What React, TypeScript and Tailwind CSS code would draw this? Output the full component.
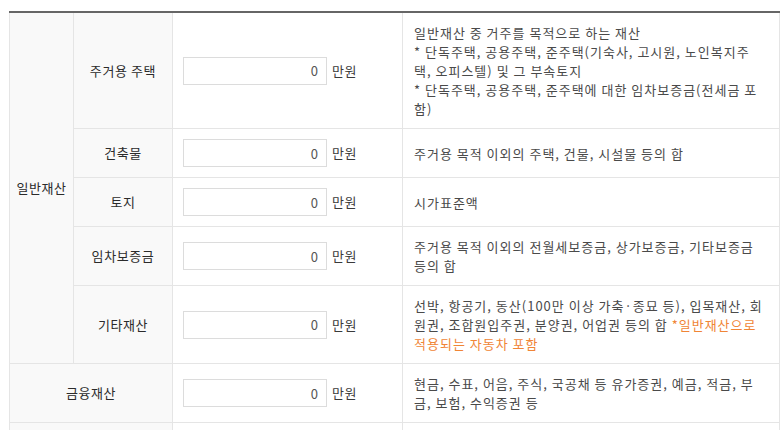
import type { ReactNode } from 'react';

const font = { fontFamily: '"Noto Sans CJK KR", "Noto Sans", sans-serif' };

const labelCls =
  'bg-[#f9f9f9] border border-[#e5e5e5] font-normal text-[13px] tracking-[0.6px] text-[#2b2b2b] text-center';
const descCls =
  'border border-[#e5e5e5] pl-[11px] pr-[4px] py-[10px] text-[13px] tracking-[1px] leading-[19px] text-[#4a4a4a]';

function AmountInput() {
  return (
    <div className="flex items-center gap-[5px]">
      <input
        readOnly
        value="0"
        className="w-[144px] h-[28px] border border-[#dcdcdc] bg-white text-right pr-[8px] text-[13px] text-[#555] outline-none"
      />
      <span className="text-[13px] tracking-[0.6px] text-[#3a3a3a]">만원</span>
    </div>
  );
}

function Row({ label, desc, first }: { label: string; desc: ReactNode; first?: ReactNode }) {
  return (
    <tr>
      {first}
      <th className={labelCls}>{label}</th>
      <td className="border border-[#e5e5e5] pl-[10px] py-[10px] align-middle">
        <AmountInput />
      </td>
      <td className={descCls}>{desc}</td>
    </tr>
  );
}

export default function App() {
  return (
    <div className="bg-white w-[784px] h-[430px] overflow-hidden pt-[11px] pl-[9px]" style={font}>
      <table className="w-[770px] border-collapse border-t-2 border-t-[#666] table-fixed">
        <colgroup>
          <col className="w-[64px]" />
          <col className="w-[99px]" />
          <col className="w-[230px]" />
          <col className="w-[377px]" />
        </colgroup>
        <tbody>
          <Row
            first={
              <th rowSpan={5} className={labelCls}>
                일반재산
              </th>
            }
            label="주거용 주택"
            desc={
              <>
                일반재산 중 거주를 목적으로 하는 재산
                <br />* 단독주택, 공용주택, 준주택(기숙사, 고시원, 노인복지주
                <br />택, 오피스텔) 및 그 부속토지
                <br />* 단독주택, 공용주택, 준주택에 대한 임차보증금(전세금 포
                <br />함)
              </>
            }
          />
          <Row label="건축물" desc="주거용 목적 이외의 주택, 건물, 시설물 등의 합" />
          <Row label="토지" desc="시가표준액" />
          <Row
            label="임차보증금"
            desc={
              <>
                주거용 목적 이외의 전월세보증금, 상가보증금, 기타보증금
                <br />
                등의 합
              </>
            }
          />
          <Row
            label="기타재산"
            desc={
              <>
                선박, 항공기, 동산(100만 이상 가축·종묘 등), 입목재산, 회
                <br />
                원권, 조합원입주권, 분양권, 어업권 등의 합{' '}
                <span className="text-[#f08536]">
                  *일반재산으로
                  <br />
                  적용되는 자동차 포함
                </span>
              </>
            }
          />
          <tr>
            <th colSpan={2} className={labelCls}>
              금융재산
            </th>
            <td className="border border-[#e5e5e5] pl-[10px] py-[10px]">
              <AmountInput />
            </td>
            <td className={descCls}>
              현금, 수표, 어음, 주식, 국공채 등 유가증권, 예금, 적금, 부
              <br />금, 보험, 수익증권 등
            </td>
          </tr>
          {/* next row continues below the fold */}
          <tr className="h-[48px]">
            <th colSpan={2} className={labelCls} />
            <td className="border border-[#e5e5e5]" />
            <td className="border border-[#e5e5e5]" />
          </tr>
        </tbody>
      </table>
    </div>
  );
}
